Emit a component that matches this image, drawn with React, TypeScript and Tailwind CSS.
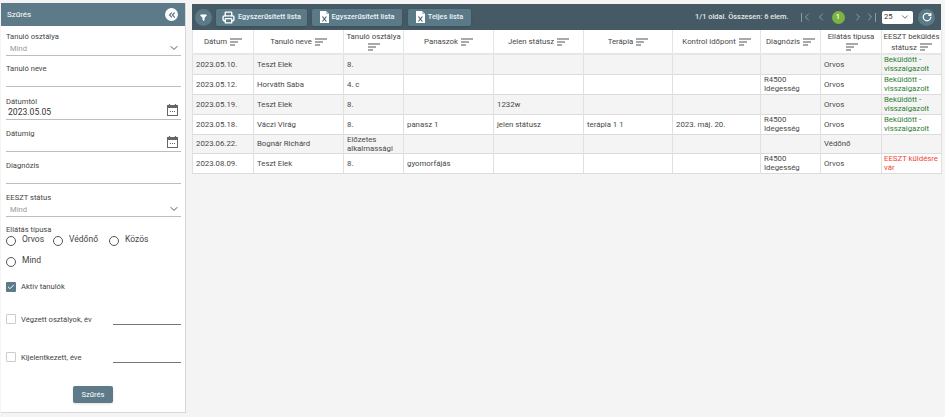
import { ChevronDown, ChevronLeft, ChevronRight, ChevronsLeft, Check, Filter, Printer, RotateCw } from "lucide-react";

const columns = [
  { label: "Dátum", width: "w-[61px]" },
  { label: "Tanuló neve", width: "w-[90px]" },
  { label: "Tanuló osztálya", width: "w-[60px]" },
  { label: "Panaszok", width: "w-[90px]" },
  { label: "Jelen státusz", width: "w-[90px]" },
  { label: "Terápia", width: "w-[89px]" },
  { label: "Kontrol időpont", width: "w-[88px]" },
  { label: "Diagnózis", width: "w-[60px]" },
  { label: "Ellátás típusa", width: "w-[61px]" },
  { label: "EESZT beküldés státusz", width: "w-[60px]" },
];

const ok = "Beküldött - visszaigazolt";

const rows = [
  { date: "2023.05.10.", name: "Teszt Elek", cls: "8.", pan: "", jelen: "", ter: "", kontrol: "", diag: false, ell: "Orvos", st: ok },
  { date: "2023.05.12.", name: "Horváth Saba", cls: "4. c", pan: "", jelen: "", ter: "", kontrol: "", diag: true, ell: "Orvos", st: ok },
  { date: "2023.05.19.", name: "Teszt Elek", cls: "8.", pan: "", jelen: "1232w", ter: "", kontrol: "", diag: false, ell: "Orvos", st: ok },
  { date: "2023.05.18.", name: "Váczi Virág", cls: "8.", pan: "panasz 1", jelen: "jelen státusz", ter: "terápia 1 1", kontrol: "2023. máj. 20.", diag: true, ell: "Orvos", st: ok },
  { date: "2023.06.22.", name: "Bognár Richárd", cls: "Előzetes alkalmassági", pan: "", jelen: "", ter: "", kontrol: "", diag: false, ell: "Védőnő", st: "" },
  { date: "2023.08.09.", name: "Teszt Elek", cls: "8.", pan: "gyomorfájás", jelen: "", ter: "", kontrol: "", diag: true, ell: "Orvos", st: "EESZT küldésre vár" },
];

function SortIcon() {
  return (
    <svg width="12" height="8" viewBox="0 0 12 8" className="inline-block ml-[1px] text-[#555]">
      <path d="M0 1h12M0 4h8M0 7h5" stroke="currentColor" strokeWidth="1.1" fill="none" />
    </svg>
  );
}

function CalendarIcon() {
  return (
    <svg width="11" height="12" viewBox="0 0 11 12" className="text-[#666]">
      <path d="M2.5 0v2M8.5 0v2" stroke="currentColor" strokeWidth="1.2" />
      <rect x="0.5" y="1.5" width="10" height="10" fill="none" stroke="currentColor" />
      <rect x="0.5" y="1.5" width="10" height="2.5" fill="currentColor" />
      <path d="M3 7.5h1M5 7.5h1M7 7.5h1" stroke="currentColor" />
    </svg>
  );
}

function ExcelIcon() {
  return (
    <svg width="9" height="12" viewBox="0 0 9 12">
      <path d="M0 0h6l3 3v9H0z" fill="#fff" />
      <path d="M6 0v3h3" fill="#b9c6cc" />
      <path d="M2.4 5.5l4 5M6.4 5.5l-4 5" stroke="#455a64" strokeWidth="1.1" />
    </svg>
  );
}

function Field({ label, children, className }: { label: string; children?: React.ReactNode; className: string }) {
  return (
    <div className={`flex flex-col border-b border-[#bdbdbd] ${className}`}>
      <span className="text-[7.6px] leading-[11px] text-[#444]">{label}</span>
      {children}
    </div>
  );
}

function Radio({ label, className = "" }: { label: string; className?: string }) {
  return (
    <div className={`flex items-center gap-[6px] ${className}`}>
      <span className="w-[10px] h-[10px] rounded-full border border-[#555] bg-white" />
      <span className="text-[8.5px] leading-none text-[#444] -mt-[3px]">{label}</span>
    </div>
  );
}

function ToolButton({ icon, label, className }: { icon: React.ReactNode; label: string; className: string }) {
  return (
    <div className={`h-[17px] flex items-center justify-center gap-[3px] rounded-[2px] bg-[#5a7a88] text-[7.4px] font-medium shadow-sm ${className}`}>
      {icon}
      <span className="text-[#eef2f4]">{label}</span>
    </div>
  );
}

function Check2({ checked }: { checked?: boolean }) {
  if (checked) {
    return (
      <span className="w-[10px] h-[10px] rounded-[1px] bg-[#5c7a88] flex items-center justify-center">
        <Check size={8} strokeWidth={3} className="text-white" />
      </span>
    );
  }
  return <span className="w-[10px] h-[10px] rounded-[1px] border border-[#ccc] bg-white" />;
}

export default function App() {
  return (
    <div className="w-[945px] h-[417px] overflow-hidden bg-[#f4f4f4] flex items-start pt-[3px] pl-[1px] gap-[6px] font-['Roboto',sans-serif]">
      {/* filter panel */}
      <aside className="w-[185px] h-[410px] bg-white border-r border-b border-[#d8d8d8] flex flex-col">
        <div className="h-[23px] shrink-0 bg-[#5c7a88] flex items-center justify-between pl-[6px] pr-[7px]">
          <span className="text-white text-[8px]">Szűrés</span>
          <span className="w-[13px] h-[13px] rounded-full bg-white flex items-center justify-center">
            <ChevronsLeft size={10} strokeWidth={3} className="text-[#5c7a88]" />
          </span>
        </div>
        <div className="flex flex-col pl-[5px] pr-[4px] pt-[5px]">
          <Field label="Tanuló osztálya" className="h-[25px] mb-[7px]">
            <div className="flex items-center justify-between pl-[4px] pr-[1px]">
              <span className="text-[7.6px] leading-[11px] text-[#999]">Mind</span>
              <ChevronDown size={12} className="text-[#555]" />
            </div>
          </Field>
          <Field label="Tanuló neve" className="h-[24px] mb-[9px]" />
          <Field label="Dátumtól" className="h-[24px] mb-[8px]">
            <div className="flex items-start justify-between pl-[2px] pr-[3px] -mt-[3px]">
              <span className="text-[8.6px] leading-[14px] mt-[1px] text-[#333]">2023.05.05</span>
              <CalendarIcon />
            </div>
          </Field>
          <Field label="Dátumig" className="h-[24px] mb-[8px]">
            <div className="flex justify-end pr-[3px] -mt-[3px]">
              <CalendarIcon />
            </div>
          </Field>
          <Field label="Diagnózis" className="h-[24px] mb-[8px]" />
          <Field label="EESZT státus" className="h-[25px] mb-[8px]">
            <div className="flex items-center justify-between pl-[4px] pr-[1px]">
              <span className="text-[7.6px] leading-[11px] text-[#999]">Mind</span>
              <ChevronDown size={12} className="text-[#555]" />
            </div>
          </Field>
          <span className="text-[7.6px] leading-[10px] text-[#444]">Ellátás típusa</span>
          <div className="flex gap-[9px] mt-[1px]">
            <Radio label="Orvos" />
            <Radio label="Védőnő" />
            <Radio label="Közös" className="ml-[2px]" />
          </div>
          <div className="flex mt-[11px]">
            <Radio label="Mind" />
          </div>
          <div className="flex items-center gap-[5px] mt-[14px]">
            <Check2 checked />
            <span className="text-[7.6px] text-[#444]">Aktív tanulók</span>
          </div>
          <div className="flex items-center gap-[5px] mt-[21px]">
            <Check2 />
            <span className="text-[7.6px] text-[#444] w-[87px]">Végzett osztályok, év</span>
            <span className="w-[68px] h-[9px] mt-[3px] border-b border-[#777]" />
          </div>
          <div className="flex items-center gap-[5px] mt-[26px]">
            <Check2 />
            <span className="text-[7.6px] text-[#444] w-[87px]">Kijelentkezett, éve</span>
            <span className="w-[68px] h-[9px] mt-[3px] border-b border-[#777]" />
          </div>
          <div className="flex justify-center mt-[23px] pr-[1px]">
            <div className="w-[40px] h-[17px] rounded-[2px] bg-[#5c7a88] shadow text-white text-[7.6px] flex items-center justify-center">
              Szűrés
            </div>
          </div>
        </div>
      </aside>

      {/* list */}
      <main className="w-[749px] mt-[1px] flex flex-col">
        <div className="h-[26px] shrink-0 bg-[#455a64] flex items-center pl-[3px]">
          <span className="w-[17px] h-[17px] rounded-full bg-[#5a7a88] flex items-center justify-center mr-[4px]">
            <Filter size={7} strokeWidth={3} className="text-white fill-white" />
          </span>
          <div className="flex">
            <ToolButton className="w-[91px]" icon={<Printer size={13} strokeWidth={2.5} className="text-white" />} label="Egyszerűsített lista" />
            <ToolButton className="w-[90px] ml-[5px]" icon={<ExcelIcon />} label="Egyszerűsített lista" />
            <ToolButton className="w-[63px] ml-[6px]" icon={<ExcelIcon />} label="Teljes lista" />
          </div>
          <span className="ml-auto text-[7.4px] font-medium text-[#e4e9eb]">1/1 oldal. Összesen: 6 elem.</span>
          <div className="flex items-center ml-[12px] text-[#8b9ea7]">
            <span className="w-[1.5px] h-[9px] bg-[#8b9ea7]" />
            <ChevronLeft size={12} className="-ml-[1.5px]" />
            <ChevronLeft size={12} className="ml-[2px]" />
            <span className="w-[13px] h-[13px] ml-[5px] rounded-full bg-[#7cb342] text-white text-[7.5px] font-medium flex items-center justify-center">
              1
            </span>
            <ChevronRight size={12} className="ml-[7px]" />
            <ChevronRight size={12} />
            <span className="w-[1.5px] h-[9px] bg-[#8b9ea7] -ml-[1px]" />
          </div>
          <div className="w-[31px] h-[13px] ml-[6px] rounded-[2px] bg-white flex items-center justify-between pl-[2px] pr-[3px] text-[7.6px] text-[#333]">
            25
            <ChevronDown size={10} className="text-[#455a64]" />
          </div>
          <span className="w-[17px] h-[17px] ml-[5px] mr-[6px] rounded-full bg-[#5a7a88] flex items-center justify-center">
            <RotateCw size={10} strokeWidth={3} className="text-white" />
          </span>
        </div>
        <table className="w-[749px] table-fixed border-collapse bg-white text-[7.8px] leading-[9px] text-[#484848]">
          <colgroup>
            {columns.map((c) => (
              <col key={c.label} className={c.width} />
            ))}
          </colgroup>
          <thead>
            <tr className="h-[24px] border-b-[2px] border-[#e6e6e6]">
              {columns.map((c) => (
                <th key={c.label} className="border-x border-[#e4e4e4] p-0 font-normal leading-[11px] text-center align-middle">
                  {c.label} <SortIcon />
                </th>
              ))}
            </tr>
          </thead>
          <tbody>
            {rows.map((r, i) => (
              <tr key={i} className={`${i === 4 ? "h-[19px]" : "h-[20px]"} border-b border-[#dcdcdc] ${i % 2 === 0 ? "bg-[#f4f4f4]" : "bg-white"}`}>
                <td className="border-x border-[#e0e0e0] px-[3px] py-0">{r.date}</td>
                <td className="border-x border-[#e0e0e0] px-[3px] py-0">{r.name}</td>
                <td className="border-x border-[#e0e0e0] px-[3px] py-0">{r.cls}</td>
                <td className="border-x border-[#e0e0e0] px-[3px] py-0">{r.pan}</td>
                <td className="border-x border-[#e0e0e0] px-[3px] py-0">{r.jelen}</td>
                <td className="border-x border-[#e0e0e0] px-[3px] py-0">{r.ter}</td>
                <td className="border-x border-[#e0e0e0] px-[3px] py-0">{r.kontrol}</td>
                <td className="border-x border-[#e0e0e0] px-[3px] py-0">
                  {r.diag && (
                    <>
                      R4500
                      <br />
                      Idegesség
                    </>
                  )}
                </td>
                <td className="border-x border-[#e0e0e0] px-[3px] py-0">{r.ell}</td>
                <td className={`border-x border-[#e0e0e0] pl-[2px] pr-0 py-0 ${r.st === ok ? "text-[#2e7d32]" : "text-[#f44336]"}`}>{r.st}</td>
              </tr>
            ))}
          </tbody>
        </table>
      </main>
    </div>
  );
}
